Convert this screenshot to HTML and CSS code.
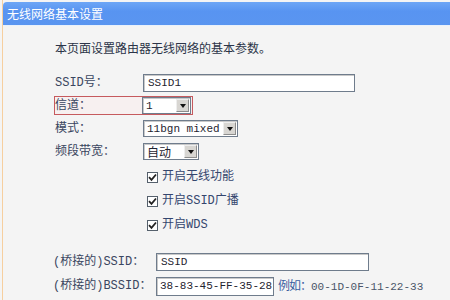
FILE: index.html
```html
<!DOCTYPE html>
<html>
<head>
<meta charset="utf-8">
<link rel="stylesheet" href="styles.css">
</head>
<body>
<div class="page">
  <div class="header">无线网络基本设置</div>
  <div class="content">
    <p class="intro">本页面设置路由器无线网络的基本参数。</p>
    <div class="form">
      <div class="row">
        <span class="label">SSID号：</span>
        <span class="input w-ssid">SSID1</span>
      </div>
      <div class="row">
        <span class="mark">
          <span class="label">信道：</span>
          <span class="select w-ch"><span class="val">1</span><span class="arrow"></span></span>
        </span>
      </div>
      <div class="row">
        <span class="label">模式：</span>
        <span class="select w-mode"><span class="val">11bgn mixed</span><span class="arrow"></span></span>
      </div>
      <div class="row">
        <span class="label">频段带宽：</span>
        <span class="select w-bw"><span class="val cjk">自动</span><span class="arrow"></span></span>
      </div>
    </div>
    <div class="checks">
      <div class="check"><span class="box"><svg width="9" height="9" viewBox="0 0 9 9"><path d="M1 4.2 L3.5 6.8 L8 1.5" fill="none" stroke="#222" stroke-width="1.8"/></svg></span><span class="ctext">开启无线功能</span></div>
      <div class="check"><span class="box"><svg width="9" height="9" viewBox="0 0 9 9"><path d="M1 4.2 L3.5 6.8 L8 1.5" fill="none" stroke="#222" stroke-width="1.8"/></svg></span><span class="ctext">开启SSID广播</span></div>
      <div class="check"><span class="box"><svg width="9" height="9" viewBox="0 0 9 9"><path d="M1 4.2 L3.5 6.8 L8 1.5" fill="none" stroke="#222" stroke-width="1.8"/></svg></span><span class="ctext">开启WDS</span></div>
    </div>
    <div class="bridge">
      <div class="row brow">
        <span class="label">(桥接的)SSID：</span>
        <span class="input w-bssid">SSID</span>
      </div>
      <div class="row brow">
        <span class="label">(桥接的)BSSID：</span>
        <span class="inline">
          <span class="input w-mac">38-83-45-FF-35-28</span>
          <span class="hint"><span class="hint-cjk">例如：</span><span class="hint-mac">00-1D-0F-11-22-33</span></span>
        </span>
      </div>
    </div>
  </div>
</div>
</body>
</html>
```

FILE: styles.css
```css
html, body {
  margin: 0;
  padding: 0;
}
body {
  background: #f4f4f4;
  font-family: "Liberation Mono", "Noto Sans CJK SC", monospace;
  font-size: 12px;
  color: #333c52;
  width: 450px;
  height: 300px;
  overflow: hidden;
}
.page {
  margin-left: 2px;
  padding-top: 2px;
  border-left: 1px solid #f6cf9f;
  min-height: 298px;
  background: #f4f4f4;
}
.header {
  height: 23px;
  line-height: 23px;
  background: linear-gradient(#6da6f6, #5894f1 40%, #5a95f0);
  border-top-left-radius: 4px;
  border-bottom: 1px solid #e9f1fb;
  color: #ffffff;
  font-family: "Noto Sans CJK SC", sans-serif;
  font-size: 12px;
  padding-left: 4px;
}
.content {
  padding-left: 52px;
}
.intro {
  margin: 14px 0 0 0;
  line-height: 16px;
  font-family: "Noto Sans CJK SC", sans-serif;
  font-size: 12px;
  color: #2c3448;
}
.form {
  margin-top: 15px;
}
.row {
  display: grid;
  grid-template-columns: 88px auto;
  align-items: center;
  height: 23px;
}
.label {
  white-space: nowrap;
  line-height: 16px;
  color: #3a4660;
}
.mark {
  grid-column: 1 / span 2;
  display: flex;
  align-items: center;
  margin-left: -1px;
  border: 1px solid #c65a5e;
  background: #f7f0f0;
  width: 137px;
}
.mark .label {
  width: 87px;
}
.input, .select {
  display: flex;
  align-items: center;
  box-sizing: border-box;
  background: #ffffff;
  border: 1px solid #6f7c8c;
  box-shadow: inset 1px 1px 0 #c9c9c9;
  font-family: "Liberation Mono", monospace;
  font-size: 11px;
  color: #1f2430;
  white-space: nowrap;
}
.input {
  height: 18px;
  padding-left: 4px;
}
.w-ssid { width: 212px; }
.w-bssid { width: 213px; }
.w-mac { width: 118px; height: 19px; padding-left: 3px; }
.select {
  height: 17px;
  padding-left: 3px;
  justify-content: space-between;
}
.w-ch { width: 49px; }
.w-mode { width: 95px; }
.w-bw { width: 56px; }
.val.cjk {
  font-family: "Noto Sans CJK SC", sans-serif;
  font-size: 12px;
}
.arrow {
  width: 13px;
  height: 13px;
  margin-right: 1px;
  background: #d8d6d2;
  border: 1px solid #eeeeee;
  border-right-color: #8d8d8d;
  border-bottom-color: #8d8d8d;
  box-sizing: border-box;
  display: flex;
  align-items: center;
  justify-content: center;
}
.arrow::after {
  content: "";
  border-left: 3.5px solid transparent;
  border-right: 3.5px solid transparent;
  border-top: 4px solid #111;
  margin-top: 1px;
}
.checks {
  margin-top: 2px;
  padding-left: 92px;
}
.check {
  display: flex;
  align-items: center;
  height: 24px;
}
.box {
  width: 11px;
  height: 11px;
  box-sizing: border-box;
  border: 1px solid #55606c;
  background: #ffffff;
  display: flex;
  align-items: center;
  justify-content: center;
  margin-right: 4px;
}
.ctext {
  line-height: 16px;
  color: #34466e;
}
.bridge {
  margin-top: 13px;
  margin-left: -2px;
}
.brow {
  grid-template-columns: 103px auto;
  height: 24px;
}
.inline {
  display: flex;
  align-items: center;
}
.hint {
  margin-left: 4px;
  white-space: nowrap;
  line-height: 16px;
}
.hint-cjk {
  font-family: "Noto Sans CJK SC", sans-serif;
  color: #3b5da0;
  letter-spacing: -1px;
}
.hint-mac {
  font-family: "Liberation Mono", monospace;
  font-size: 11px;
  color: #4a5468;
}
```
